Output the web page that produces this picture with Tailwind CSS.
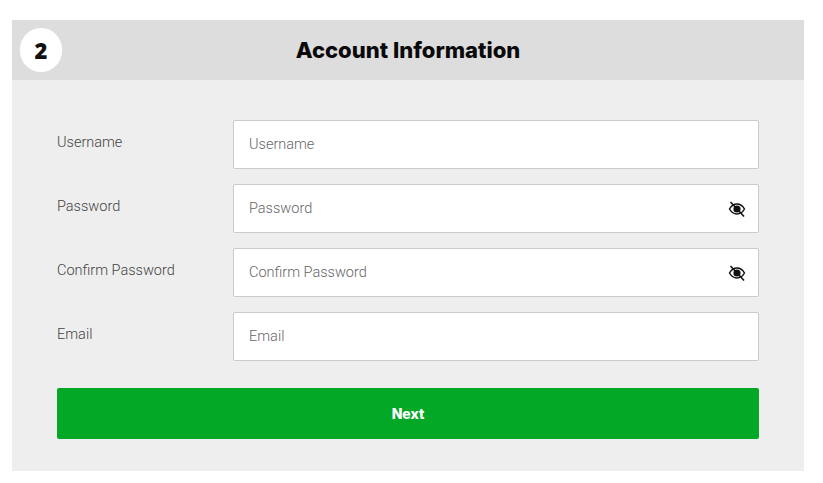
<!DOCTYPE html>
<html>
<head>
<meta charset="utf-8">
<script src="https://cdn.jsdelivr.net/npm/@tailwindcss/browser@4"></script>
</head>
<body class="bg-white font-['Roboto',sans-serif]">
<div class="pt-5 pl-3 w-[823px] h-[483px]">
  <div class="w-[792px] h-[451px] bg-[#eeeeee]">
    <div class="relative h-[60px] bg-[#dddddd] flex items-center justify-center">
      <div class="absolute left-2 top-2 w-[42px] h-[44px] rounded-full bg-white flex items-center justify-center font-['Open_Sans',sans-serif] font-extrabold text-[22px] text-[#111]">2</div>
      <h1 class="font-['Inter',sans-serif] font-extrabold text-[22px] leading-none text-[#0a0a0a]">Account Information</h1>
    </div>
    <form class="pt-10 pl-[45px] pr-[45px]">
      <div class="flex flex-col gap-[15px]">
        <div class="flex h-[49px]">
          <label class="w-[176px] pt-[13px] text-[14.5px] leading-5 font-light text-[#444]">Username</label>
          <div class="flex-1 flex items-center bg-white border border-[#cccccc] rounded-[2px] pl-[15px] pr-3">
            <input placeholder="Username" class="w-full outline-none text-[14.5px] font-light placeholder:text-[#666]">
          </div>
        </div>
        <div class="flex h-[49px]">
          <label class="w-[176px] pt-[13px] text-[14.5px] leading-5 font-light text-[#444]">Password</label>
          <div class="flex-1 flex items-center bg-white border border-[#cccccc] rounded-[2px] pl-[15px] pr-3">
            <input placeholder="Password" class="w-full outline-none text-[14.5px] font-light placeholder:text-[#666]">
            <svg class="w-[18px] h-[18px] shrink-0 mt-[1px]" viewBox="0 0 18 18" fill="none" stroke="#111"><path d="M1.5 9C3.5 5.5 6 4 9 4s5.5 1.500 7.500 5c-2 3.500-4.500 5-7.500 5s-5.500-1.500-7.500-5z" stroke-width="1.500"/><circle cx="9" cy="9" r="3.600" fill="#111" stroke="none"/><path d="M2.500 2l13.500 14.500" stroke-width="1.600"/></svg>
          </div>
        </div>
        <div class="flex h-[49px]">
          <label class="w-[176px] pt-[13px] text-[14.5px] leading-5 font-light text-[#444]">Confirm Password</label>
          <div class="flex-1 flex items-center bg-white border border-[#cccccc] rounded-[2px] pl-[15px] pr-3">
            <input placeholder="Confirm Password" class="w-full outline-none text-[14.5px] font-light placeholder:text-[#666]">
            <svg class="w-[18px] h-[18px] shrink-0 mt-[1px]" viewBox="0 0 18 18" fill="none" stroke="#111"><path d="M1.5 9C3.5 5.5 6 4 9 4s5.500 1.500 7.500 5c-2 3.500-4.500 5-7.500 5s-5.500-1.500-7.500-5z" stroke-width="1.500"/><circle cx="9" cy="9" r="3.600" fill="#111" stroke="none"/><path d="M2.500 2l13.500 14.500" stroke-width="1.600"/></svg>
          </div>
        </div>
        <div class="flex h-[49px]">
          <label class="w-[176px] pt-[13px] text-[14.5px] leading-5 font-light text-[#444]">Email</label>
          <div class="flex-1 flex items-center bg-white border border-[#cccccc] rounded-[2px] pl-[15px] pr-3">
            <input placeholder="Email" class="w-full outline-none text-[14.5px] font-light placeholder:text-[#666]">
          </div>
        </div>
      </div>
      <button type="button" class="mt-[27px] w-full h-[51px] bg-[#03a827] rounded-[2px] text-white font-['Inter',sans-serif] font-extrabold text-sm">Next</button>
    </form>
  </div>
</div>
</body>
</html>
